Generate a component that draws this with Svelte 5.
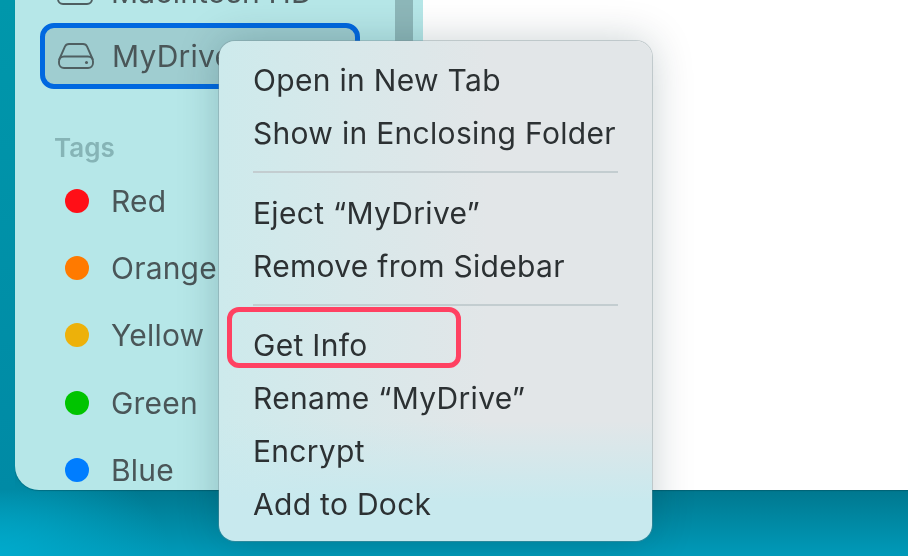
<script>
  let tags = [
    { name: "Red", color: "#ff0f17" },
    { name: "Orange", color: "#ff7a00" },
    { name: "Yellow", color: "#edb10a" },
    { name: "Green", color: "#00c400" },
    { name: "Blue", color: "#007dff" }
  ]

  let menu = [
    ["Open in New Tab", "Show in Enclosing Folder"],
    ["Eject “MyDrive”", "Remove from Sidebar"],
    ["Get Info", "Rename “MyDrive”", "Encrypt", "Add to Dock"]
  ]
</script>

{#snippet drive()}
  <svg class="drive" viewBox="0 0 36 26" width="36" height="26" fill="none" stroke="#4f5f61" stroke-width="1.9">
    <path d="M1 17 L7 3.5 Q8 1 11 1 H25 Q28 1 29 3.5 L35 17" />
    <rect x="1" y="13.5" width="34" height="11.5" rx="5" />
    <circle cx="28.5" cy="19.5" r="1.5" fill="#4f5f61" stroke="none" />
  </svg>
{/snippet}

<div class="desktop">
  <div class="window">
    <aside class="sidebar">
      <div class="row hd">
        {@render drive()}
        <span>Macintosh HD</span>
      </div>
      <div class="row selected">
        {@render drive()}
        <span>MyDrive</span>
      </div>
      <h2>Tags</h2>
      <ul>
        {#each tags as tag}
          <li>
            <span class="dot" style="background: {tag.color}"></span>
            <span>{tag.name}</span>
          </li>
        {/each}
      </ul>
      <div class="scrollbar"></div>
    </aside>
    <main class="content"></main>
  </div>

  <div class="menu">
    {#each menu as group, i}
      {#if i > 0}
        <hr />
      {/if}
      {#each group as item}
        <div class="item">{item}</div>
      {/each}
    {/each}
    <div class="highlight"></div>
  </div>
</div>

<style>
  :global(body) {
    margin: 0;
    font-family: Inter, "Liberation Sans", sans-serif;
  }

  .desktop {
    position: relative;
    width: 908px;
    height: 556px;
    overflow: hidden;
    filter: blur(0.4px);
    background:
      radial-gradient(ellipse 170px 110px at 0 100%, rgba(0, 172, 206, 0.9) 0, rgba(0, 164, 196, 0) 100%),
      linear-gradient(180deg, #00788f 490px, #009ab9 556px);
  }

  .desktop::before {
    content: "";
    position: absolute;
    left: 0;
    top: 0;
    width: 15px;
    height: 490px;
    background: linear-gradient(180deg, #0097ab, #008aa5);
  }

  .window {
    position: relative;
    display: flex;
    height: 490px;
    margin-left: 15px;
    border-bottom-left-radius: 24px;
    overflow: hidden;
    box-shadow: 0 1px 1px rgba(0, 60, 70, 0.35);
  }

  .sidebar {
    position: relative;
    width: 408px;
    flex: none;
    background: #b6e7e8;
    color: #4a5658;
    font-size: 30px;
    letter-spacing: 0.2px;
  }

  .row {
    display: flex;
    align-items: center;
    gap: 18px;
    width: 320px;
    height: 65px;
    box-sizing: border-box;
    margin-left: 25px;
    padding-left: 17px;
  }

  .hd {
    height: 46px;
    margin-top: -31px;
    margin-bottom: 8px;
  }

  .selected {
    height: 66px;
    border: 5px solid #0068e0;
    border-radius: 14px;
    background: #9fcdd0;
    padding-left: 13px;
  }

  h2 {
    margin: 42px 0 0 39px;
    height: 34px;
    line-height: 34px;
    font-size: 26px;
    font-weight: 600;
    letter-spacing: 0;
    color: #86b4b6;
  }

  ul {
    list-style: none;
    margin: 2px 0 0;
    padding: 0;
  }

  li {
    display: flex;
    align-items: center;
    gap: 22px;
    height: 67.3px;
    padding-left: 50px;
  }

  .dot {
    width: 24px;
    height: 24px;
    border-radius: 50%;
    flex: none;
  }

  .scrollbar {
    position: absolute;
    top: 0;
    left: 380px;
    bottom: 0;
    width: 18px;
    background: #8db7b9;
  }

  .content {
    flex: 1;
    background: #fff;
  }

  .menu {
    position: absolute;
    left: 219px;
    top: 41px;
    width: 433px;
    height: 500px;
    box-sizing: border-box;
    padding: 13px 34px 0;
    border-radius: 16px;
    color: #2c3133;
    font-size: 30px;
    letter-spacing: 0.3px;
    background:
      linear-gradient(180deg, rgba(200, 233, 238, 0) 76%, #c8e9ee 92%),
      linear-gradient(90deg, #cdeaec 0, #d8e8ea 30%, #e2e6e8 62%, #e2e6e8 100%);
    box-shadow:
      0 0 0 1px rgba(120, 140, 145, 0.35),
      0 0 42px rgba(0, 40, 50, 0.22);
  }

  .item {
    height: 53px;
    line-height: 53px;
    white-space: nowrap;
  }

  hr {
    height: 2px;
    margin: 11px 0 14px;
    border: 0;
    background: #c3cdd0;
  }

  hr:nth-of-type(2) {
    margin-bottom: 13px;
  }

  .highlight {
    position: absolute;
    left: 8px;
    top: 266px;
    width: 234px;
    height: 61px;
    box-sizing: border-box;
    border: 5px solid #ff4162;
    border-radius: 12px;
  }
</style>
